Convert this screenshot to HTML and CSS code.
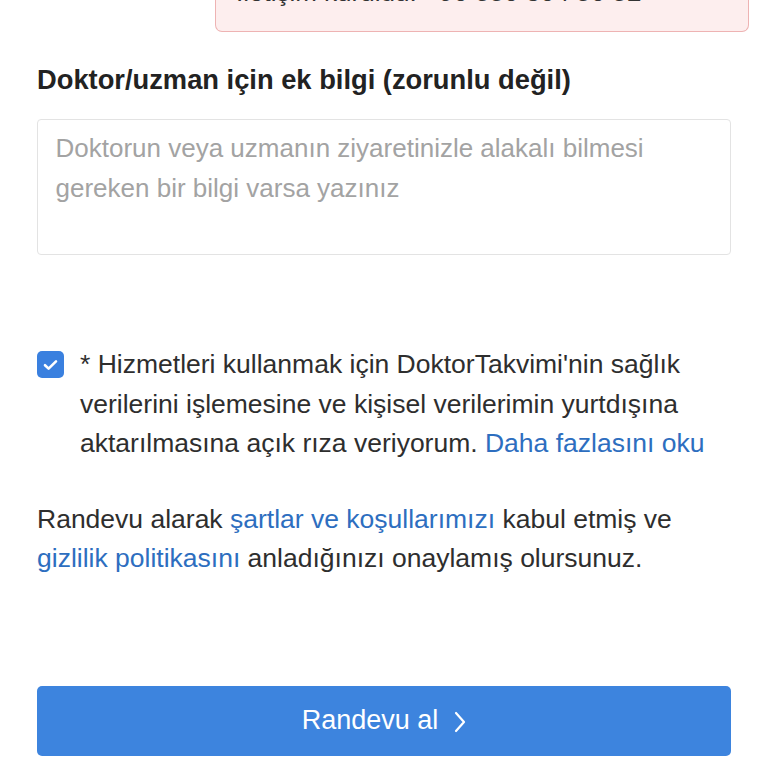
FILE: index.html
```html
<!DOCTYPE html>
<html lang="tr">
<head>
<meta charset="utf-8">
<link rel="stylesheet" href="styles.css">
</head>
<body>
<div class="page">
  <div class="alert">İletişim kuruldu: +90 850 304 50 52</div>

  <h2 class="label">Doktor/uzman için ek bilgi (zorunlu değil)</h2>
  <div class="textarea">Doktorun veya uzmanın ziyaretinizle alakalı bilmesi gereken bir bilgi varsa yazınız</div>

  <div class="consent">
    <span class="checkbox">
      <svg width="15" height="12" viewBox="0 0 15 12"><path d="M2 6.2 L5.6 9.6 L13 2.4" fill="none" stroke="#fff" stroke-width="2.6" stroke-linecap="round" stroke-linejoin="round"/></svg>
    </span>
    <p class="consent-text">* Hizmetleri kullanmak için DoktorTakvimi'nin sağlık verilerini işlemesine ve kişisel verilerimin yurtdışına aktarılmasına açık rıza veriyorum. <a class="link">Daha fazlasını oku</a></p>
  </div>

  <p class="terms">Randevu alarak <a class="link">şartlar ve koşullarımızı</a> kabul etmiş ve <a class="link">gizlilik politikasını</a> anladığınızı onaylamış olursunuz.</p>

  <div class="button">Randevu al
    <svg class="chev" width="12" height="22" viewBox="0 0 12 22"><path d="M2 2 L10 11 L2 20" fill="none" stroke="#fff" stroke-width="2.2" stroke-linecap="round" stroke-linejoin="round"/></svg>
  </div>
</div>
</body>
</html>
```
FILE: styles.css
```css
html, body {
  margin: 0;
  padding: 0;
  background: #fff;
}
body {
  font-family: "Liberation Sans", Arial, sans-serif;
  color: #2b2b2b;
  width: 768px;
  height: 768px;
  overflow: hidden;
}
.page {
  padding: 0 37px;
  display: flex;
  flex-direction: column;
}
.alert {
  margin: -30px -18px 0 178px;
  height: 62px;
  box-sizing: border-box;
  background: #fdeeee;
  border: 1.5px solid #eeb3b3;
  border-top: none;
  border-radius: 0 0 7px 7px;
  padding: 9px 0 0 20px;
  font-size: 26px;
  line-height: 26px;
  color: #333;
  white-space: nowrap;
  overflow: hidden;
}
.label {
  margin: 30px 0 0 0;
  font-size: 27.3px;
  line-height: 36px;
  font-weight: 700;
  color: #222;
}
.textarea {
  margin-top: 21px;
  height: 136px;
  box-sizing: border-box;
  border: 1.5px solid #e3e3e3;
  border-radius: 4px;
  padding: 8px 18px 0 17.5px;
  font-size: 26px;
  line-height: 40px;
  color: #a3a3a3;
}
.consent {
  margin-top: 90px;
  display: flex;
  gap: 16px;
  align-items: flex-start;
}
.checkbox {
  flex: none;
  width: 27px;
  height: 27px;
  margin-top: 6px;
  border-radius: 5px;
  background: #3a80df;
  display: flex;
  align-items: center;
  justify-content: center;
}
.consent-text {
  margin: 0;
  font-size: 26.5px;
  line-height: 39.5px;
  color: #2e2e2e;
}
.link {
  color: #2d6ebf;
  text-decoration: none;
}
.terms {
  margin: 36px 0 0 0;
  font-size: 26.5px;
  line-height: 39.5px;
  color: #2e2e2e;
}
.button {
  margin-top: 107px;
  height: 70px;
  border-radius: 5px;
  background: #3d84de;
  color: #fff;
  font-size: 27px;
  display: flex;
  align-items: center;
  justify-content: center;
  gap: 16px;
}
.chev {
  margin-top: 2px;
}
```
